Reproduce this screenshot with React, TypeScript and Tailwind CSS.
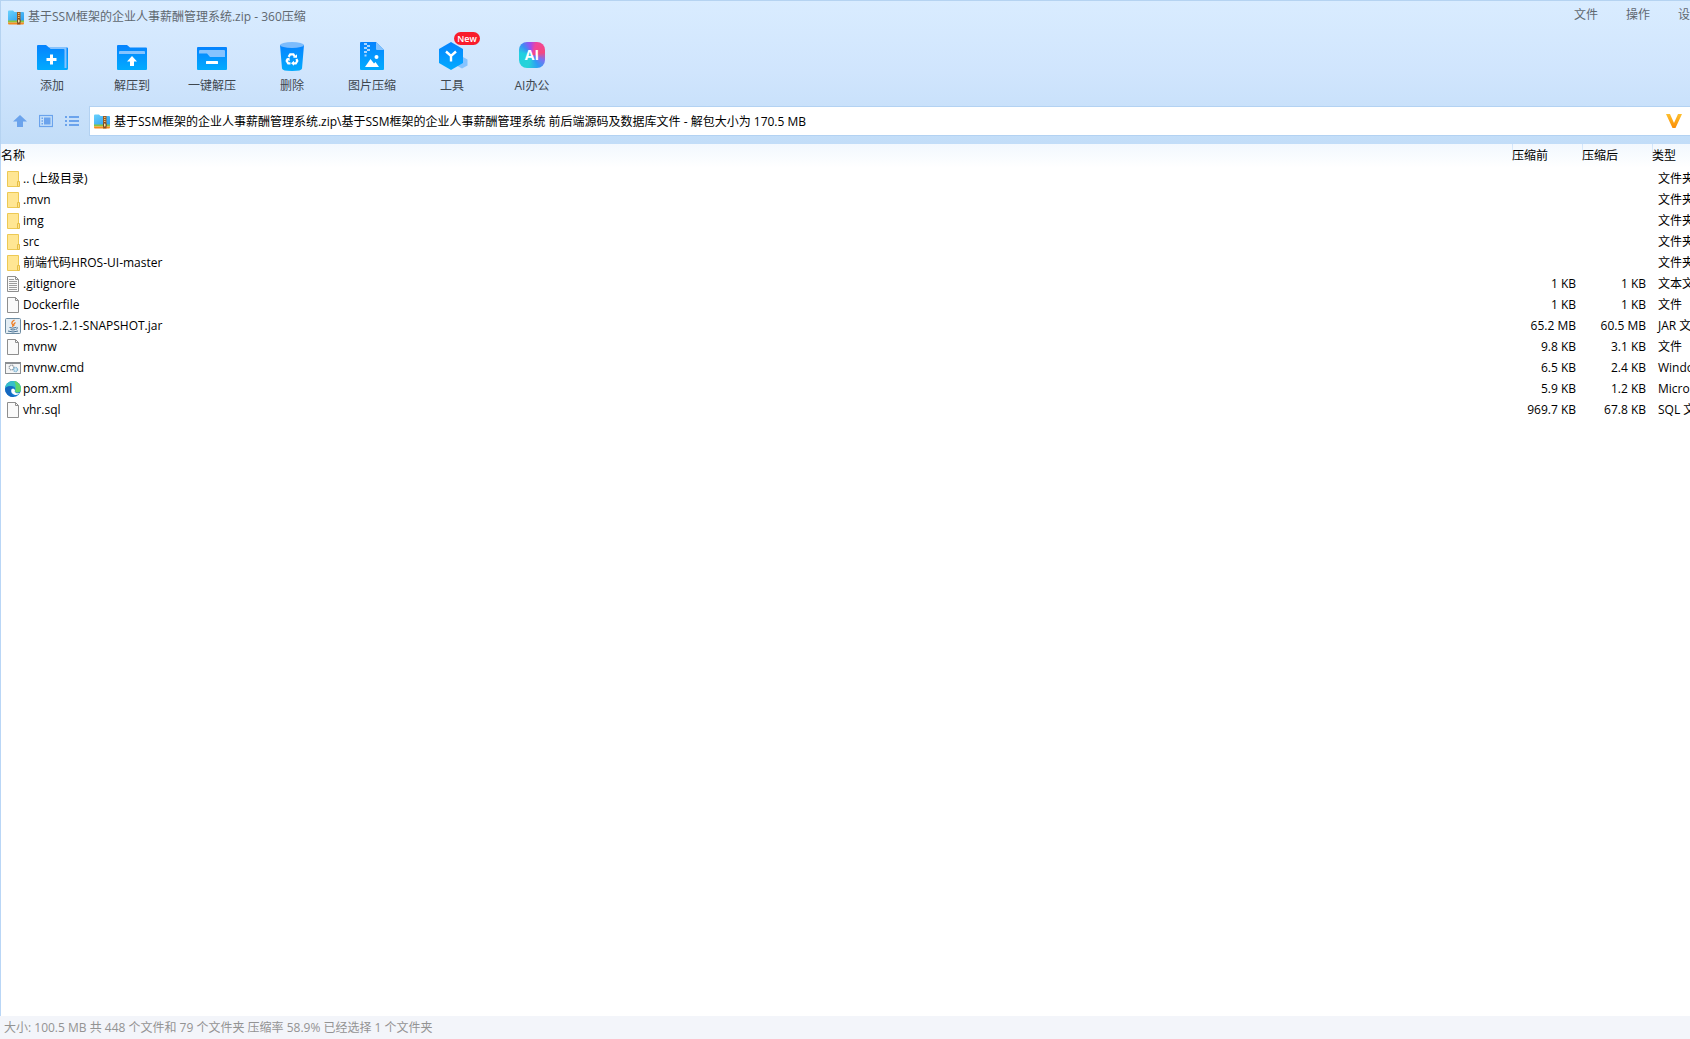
import type { ReactNode } from 'react'

type FileKind = 'folder' | 'text' | 'blank' | 'jar' | 'cmd' | 'edge'

const files: { kind: FileKind; name: string; before: string; after: string; type: string }[] = [
  { kind: 'folder', name: '.. (上级目录)', before: '', after: '', type: '文件夹' },
  { kind: 'folder', name: '.mvn', before: '', after: '', type: '文件夹' },
  { kind: 'folder', name: 'img', before: '', after: '', type: '文件夹' },
  { kind: 'folder', name: 'src', before: '', after: '', type: '文件夹' },
  { kind: 'folder', name: '前端代码HROS-UI-master', before: '', after: '', type: '文件夹' },
  { kind: 'text', name: '.gitignore', before: '1 KB', after: '1 KB', type: '文本文档' },
  { kind: 'blank', name: 'Dockerfile', before: '1 KB', after: '1 KB', type: '文件' },
  { kind: 'jar', name: 'hros-1.2.1-SNAPSHOT.jar', before: '65.2 MB', after: '60.5 MB', type: 'JAR 文件' },
  { kind: 'blank', name: 'mvnw', before: '9.8 KB', after: '3.1 KB', type: '文件' },
  { kind: 'cmd', name: 'mvnw.cmd', before: '6.5 KB', after: '2.4 KB', type: 'Windows' },
  { kind: 'edge', name: 'pom.xml', before: '5.9 KB', after: '1.2 KB', type: 'Microsoft' },
  { kind: 'blank', name: 'vhr.sql', before: '969.7 KB', after: '67.8 KB', type: 'SQL 文件' },
]

const tools: { label: string; icon: ReactNode; isNew?: boolean }[] = [
  { label: '添加', icon: <AddIcon /> },
  { label: '解压到', icon: <ExtractIcon /> },
  { label: '一键解压', icon: <OneKeyIcon /> },
  { label: '删除', icon: <TrashIcon /> },
  { label: '图片压缩', icon: <ImageZipIcon /> },
  { label: '工具', icon: <ToolIcon />, isNew: true },
  { label: 'AI办公', icon: <AiIcon /> },
]

export default function App() {
  return (
    <div className="flex h-screen flex-col overflow-hidden bg-white font-['Open_Sans','Noto_Sans_CJK_SC',sans-serif] text-xs text-black">
      <header className="shrink-0 border-t border-l border-[#b5d3f1] bg-linear-to-b from-[#d9ecff] via-[#d0e5fd] to-[#c2ddf8]">
        {/* Title bar */}
        <div className="flex h-8 items-center justify-between overflow-hidden pl-[7px]">
          <h1 className="flex items-center gap-1 text-[#5f6870]">
            <ZipIcon />
            基于SSM框架的企业人事薪酬管理系统.zip - 360压缩
          </h1>
          <nav className="-mr-3 flex gap-7 pb-1 text-[#5f6870]">
            <button type="button">文件</button>
            <button type="button">操作</button>
            <button type="button">设置</button>
          </nav>
        </div>

        {/* Toolbar */}
        <div className="flex h-[73px] pt-2 pl-[11px]">
          {tools.map((tool) => (
            <button key={tool.label} type="button" className="relative flex w-20 flex-col items-center gap-[5px] text-[#3f474f]">
              {tool.icon}
              {tool.label}
              {tool.isNew && (
                <span className="absolute -top-[9px] left-[42px] h-[13px] w-[26px] rounded-full bg-[#f91c2b] text-center text-[9px] leading-[13px] font-semibold text-white">
                  New
                </span>
              )}
            </button>
          ))}
        </div>

        {/* Address bar */}
        <div className="flex h-[38px] items-start">
          <div className="flex h-[30px] w-[88px] items-center gap-3 pl-3">
            <button type="button" aria-label="向上"><UpIcon /></button>
            <button type="button" aria-label="预览"><PanelIcon /></button>
            <button type="button" aria-label="列表"><ListIcon /></button>
          </div>
          <div className="flex h-[30px] flex-1 items-center gap-1 border border-r-0 border-[#b3d2f2] bg-white pr-2 pl-1">
            <ZipIcon />
            <input
              type="text"
              aria-label="路径"
              className="h-full min-w-0 flex-1 outline-none"
              defaultValue="基于SSM框架的企业人事薪酬管理系统.zip\基于SSM框架的企业人事薪酬管理系统 前后端源码及数据库文件 - 解包大小为 170.5 MB"
            />
            <button type="button" aria-label="展开"><VIcon /></button>
          </div>
        </div>
      </header>

      {/* File list */}
      <main className="min-h-0 flex-1 overflow-hidden border-l border-[#b9d6f6]">
        <table className="w-full table-fixed border-collapse text-left whitespace-nowrap">
          <thead>
            <tr className="h-6 bg-linear-to-b from-[#f2f8fe] to-white">
              <th className="font-normal">名称</th>
              <th className="w-[70px] bg-linear-to-b from-[#cfe4fa] to-transparent bg-[length:1px_16px] bg-no-repeat font-normal">压缩前</th>
              <th className="w-[70px] bg-linear-to-b from-[#cfe4fa] to-transparent bg-[length:1px_16px] bg-no-repeat font-normal">压缩后</th>
              <th className="w-[38px] overflow-hidden bg-linear-to-b from-[#cfe4fa] to-transparent bg-[length:1px_16px] bg-no-repeat font-normal">类型</th>
            </tr>
          </thead>
          <tbody>
            {files.map((file) => (
              <tr key={file.name} className="h-[21px]">
                <td>
                  <div className="flex items-center gap-[2px] pl-1">
                    <FileIcon kind={file.kind} />
                    {file.name}
                  </div>
                </td>
                <td className="pr-[6px] text-right">{file.before}</td>
                <td className="pr-[6px] text-right">{file.after}</td>
                <td className="overflow-hidden pl-[6px]">{file.type}</td>
              </tr>
            ))}
          </tbody>
        </table>
      </main>

      <footer className="flex h-[23px] shrink-0 items-center bg-[#f3f5fa] pl-1 text-[#939393]">
        大小: 100.5 MB 共 448 个文件和 79 个文件夹 压缩率 58.9% 已经选择 1 个文件夹
      </footer>
    </div>
  )
}

function ZipIcon() {
  return (
    <svg viewBox="0 0 16 15" className="h-[15px] w-4 shrink-0">
      <defs>
        <linearGradient id="zip" x1="0" y1="0" x2="1" y2="1">
          <stop offset="0" stopColor="#6ad2fc" />
          <stop offset="1" stopColor="#2a9cf0" />
        </linearGradient>
      </defs>
      <path d="M0 1.500 Q0 .5 1 .5 H5 L6.500 2 H15 Q16 2 16 3 V11 H0 Z" fill="url(#zip)" />
      <rect y="10.500" width="16" height="2" fill="#8cc63c" />
      <path d="M0 12.500 H16 V13 Q16 14.500 15 14.500 H1 Q0 14.500 0 13 Z" fill="#f58a1f" />
      <rect x="9" y="2" width="3.500" height="12.500" fill="#9a5a24" />
      <path d="M10 3.500h1.500M10 5.500h1.500M10 7.500h1.500" stroke="#f6c46a" />
      <rect x="9.500" y="9" width="2.500" height="4" rx="1" fill="#fbe0a0" stroke="#5c2f10" strokeWidth=".8" />
    </svg>
  )
}

function BlueGradient({ id }: { id: string }) {
  return (
    <defs>
      <linearGradient id={id} x1="0" y1="0" x2="0" y2="1">
        <stop offset="0" stopColor="#0683fe" />
        <stop offset="1" stopColor="#02abfe" />
      </linearGradient>
    </defs>
  )
}

function AddIcon() {
  return (
    <svg viewBox="0 0 32 32" className="size-8 shrink-0">
      <BlueGradient id="add" />
      <path d="M1 5 Q1 4 2 4 H10 L13 6.500 H31 Q32 6.500 32 7.500 V27.500 Q32 29 30.500 29 H2 Q1 29 1 28 Z" fill="url(#add)" />
      <path d="M13 6 H29.500 Q30.500 6 30.500 7 V27 H28.500 V9 Q28.500 8 27.500 8 H14.500 Z" fill="#86c3fe" />
      <path d="M15.500 13.500v10M10.500 18.500h10" stroke="#fff" strokeWidth="3" />
    </svg>
  )
}

function ExtractIcon() {
  return (
    <svg viewBox="0 0 32 32" className="size-8 shrink-0">
      <BlueGradient id="extract" />
      <path d="M1 5 Q1 4 2 4 H11 L14 6.500 H30 Q31 6.500 31 7.500 V28 Q31 29 30 29 H2 Q1 29 1 28 Z" fill="url(#extract)" />
      <path d="M3 13 V11 Q3 10 4 10 H28 Q29 10 29 11 V13 Z" fill="#86c3fe" />
      <path d="M16 15 L21 20.500 H18 V25 H14 V20.500 H11 Z" fill="#fff" />
    </svg>
  )
}

function OneKeyIcon() {
  return (
    <svg viewBox="0 0 32 32" className="size-8 shrink-0">
      <BlueGradient id="onekey" />
      <rect x="1" y="6" width="30" height="23" rx="1" fill="url(#onekey)" />
      <path d="M3 10 Q3 9 4 9 H28 Q29 9 29 10 V16 H14 L11 12.500 H3 Z" fill="#86c3fe" />
      <rect x="10" y="20" width="12" height="3" rx=".5" fill="#fff" />
    </svg>
  )
}

function TrashIcon() {
  return (
    <svg viewBox="0 0 32 32" className="size-8 shrink-0">
      <BlueGradient id="trash" />
      <path d="M4 4 H28 L26 27.500 Q25.800 30 16 30 Q6.200 30 6 27.500 Z" fill="url(#trash)" />
      <ellipse cx="16" cy="4" rx="12" ry="3" fill="#7cbcfd" />
      <g fill="none" stroke="#fff" strokeWidth="2.200">
        <path d="M12.600 15.800 L14.200 13.400 H17.400 L18.800 15.600" />
        <path d="M20.400 18 L21.300 20 L19.800 22.300 H17.200" />
        <path d="M14.500 22.300 H12.200 L10.700 20 L12 17.600" />
      </g>
      <path d="M17 16.800h4v-3.600zM18 19.800v5l-3-2.500zM9.600 18.200l3.800-1.600.4 3.400z" fill="#fff" />
    </svg>
  )
}

function ImageZipIcon() {
  return (
    <svg viewBox="0 0 32 32" className="size-8 shrink-0">
      <BlueGradient id="image" />
      <path d="M4 2 Q4 1 5 1 H20 L28 9 V28 Q28 29 27 29 H5 Q4 29 4 28 Z" fill="url(#image)" />
      <path d="M20 1 L28 9 H21 Q20 9 20 8 Z" fill="#86c3fe" />
      <path d="M8 2h3v2H8zM11 4h3v2h-3zM8 6h3v2H8zM11 8h3v2h-3zM8 10h3v2H8zM8.500 13.500h2v2h-2z" fill="#a9d5ff" />
      <circle cx="20.500" cy="16" r="2" fill="#fff" />
      <path d="M9 26 L14.500 18 L18 22.500 L19.500 21 L23 26 Z" fill="#fff" />
    </svg>
  )
}

function ToolIcon() {
  return (
    <svg viewBox="0 0 32 32" className="size-8 shrink-0">
      <BlueGradient id="tool" />
      <path d="M26 15.500 L31.500 18.500 V24.500 L26 27.500 L20.500 24.500 V18.500 Z" fill="#86c3fe" />
      <path d="M15 1 L27 8 V22 L15 29 L3 22 V8 Z" fill="url(#tool)" />
      <path d="M10 10.500 L15 15 L20 10.500 M15 14.500 V20.500" fill="none" stroke="#fff" strokeWidth="2.400" />
    </svg>
  )
}

function AiIcon() {
  return (
    <span className="flex size-8 shrink-0 items-center justify-center pb-1">
      <span className="flex size-[26px] items-center justify-center rounded-lg bg-[conic-gradient(from_20deg,#f0469a,#f5487f_16%,#7d70f0_26%,#2f9bf5_36%,#27d3d8_50%,#22cfe0_72%,#3c8df5_82%,#a04cf0_92%,#f0469a)] text-sm leading-none font-bold text-white">
        AI
      </span>
    </span>
  )
}

function UpIcon() {
  return (
    <svg viewBox="0 0 14 14" className="size-[14px]">
      <path d="M7 1 L14 7.500 H10 V13 H4 V7.500 H0 Z" fill="#6ba3ec" />
    </svg>
  )
}

function PanelIcon() {
  return (
    <svg viewBox="0 0 14 14" className="size-[14px]">
      <rect x=".5" y="1.500" width="13" height="11" fill="none" stroke="#6ba3ec" strokeWidth="1.200" />
      <path d="M5 3.500h6.500v7H5zM2.500 3.500h1.500v1.500H2.500zM2.500 6.200h1.500v1.500H2.500zM2.500 9h1.500v1.500H2.500z" fill="#6ba3ec" />
    </svg>
  )
}

function ListIcon() {
  return (
    <svg viewBox="0 0 14 14" className="size-[14px]">
      <path d="M0 3h2M4 3h10M0 7h2M4 7h10M0 11h2M4 11h10" stroke="#6ba3ec" strokeWidth="2" />
    </svg>
  )
}

function VIcon() {
  return (
    <svg viewBox="0 0 16 14" className="h-[14px] w-4">
      <defs>
        <linearGradient id="vfill" x1="0" y1="0" x2="0" y2="1">
          <stop offset="0" stopColor="#fdc02f" />
          <stop offset="1" stopColor="#fb8c04" />
        </linearGradient>
      </defs>
      <path d="M0 0 H4 L8 9 L12 0 H16 L9.500 14 H6.500 Z" fill="url(#vfill)" />
    </svg>
  )
}

function FileIcon({ kind }: { kind: FileKind }) {
  return (
    <svg viewBox="0 0 16 16" className="size-4 shrink-0">
      {kind === 'folder' && (
        <>
          <path d="M2.500 .5 H13.500 V15.500 H2.500 Z" fill="#ffe693" stroke="#edc954" />
          <path d="M12.500 10.500 H14.500 V15.500 H12.500 Z" fill="#ffe08a" stroke="#e5be45" />
        </>
      )}
      {(kind === 'blank' || kind === 'text') && (
        <>
          <path d="M2.500 .5 H10.500 L13.500 3.500 V15.500 H2.500 Z" fill="#fafafa" stroke="#8e8e8e" />
          <path d="M10.500 .5 V3.500 H13.500" fill="none" stroke="#8e8e8e" />
        </>
      )}
      {kind === 'text' && <path d="M4 3.500h5M4 5.500h8M4 7.500h8M4 9.500h8M4 11.500h8M4 13.500h8" stroke="#9d9d9d" />}
      {kind === 'jar' && (
        <>
          <rect x=".5" y=".5" width="15" height="15" rx="1" fill="#e3edf4" stroke="#6d8ba1" />
          <path d="M9.500 2 Q5.500 4.500 7.500 6.500 Q8.500 7.500 7.500 9 M10.500 4.500 Q8 6 9 8" fill="none" stroke="#ee7d23" strokeWidth="1.300" />
          <path d="M4.500 9.500 Q7.500 10.800 11 9.500 M5.500 11.500 Q8 12.500 10.500 11.500 M3 13 Q8 15 13 13 M11.500 9.300 Q14 9.500 11 11.500" fill="none" stroke="#4a7396" />
        </>
      )}
      {kind === 'cmd' && (
        <>
          <rect x=".5" y="2.500" width="15" height="11" fill="#f4f5f6" stroke="#8b8f93" />
          <path d="M0 3h16" stroke="#8b8f93" strokeWidth="2" />
          <circle cx="6.500" cy="7.500" r="2.300" fill="#fff" stroke="#9aa1a8" strokeWidth="1.400" strokeDasharray="1.200 .5" />
          <circle cx="10.500" cy="9.500" r="2" fill="#d6ecf8" stroke="#7fb4d2" strokeWidth="1.400" strokeDasharray="1.200 .5" />
        </>
      )}
      {kind === 'edge' && (
        <>
          <circle cx="8" cy="8" r="8" fill="#1278cf" />
          <path d="M0 8 A8 8 0 0 1 16 8 Q16 11.500 12 11.500 Q9.500 11.500 10.500 9 Q10.500 5 6 5 Q2 5 0 8 Z" fill="#35bfc9" />
          <path d="M9 .1 A8 8 0 0 1 16 8 Q16 11.500 12 11.500 Q9.500 11.500 10.500 9 Q11.500 4 9 .1 Z" fill="#5fd66b" />
          <path d="M6.500 8 Q5 12.500 10 14 Q13 14.500 15 11.800 Q13 12.800 11 12 Q9 11 10 9 Q8.500 6.500 6.500 8 Z" fill="#fff" />
          <path d="M0 8 Q1 5 5 5.200 Q8 5.500 8.500 7 Q5.500 7.500 5.500 11 Q6 14.500 9.500 15.800 A8 8 0 0 1 0 8 Z" fill="#1568c0" />
        </>
      )}
    </svg>
  )
}
